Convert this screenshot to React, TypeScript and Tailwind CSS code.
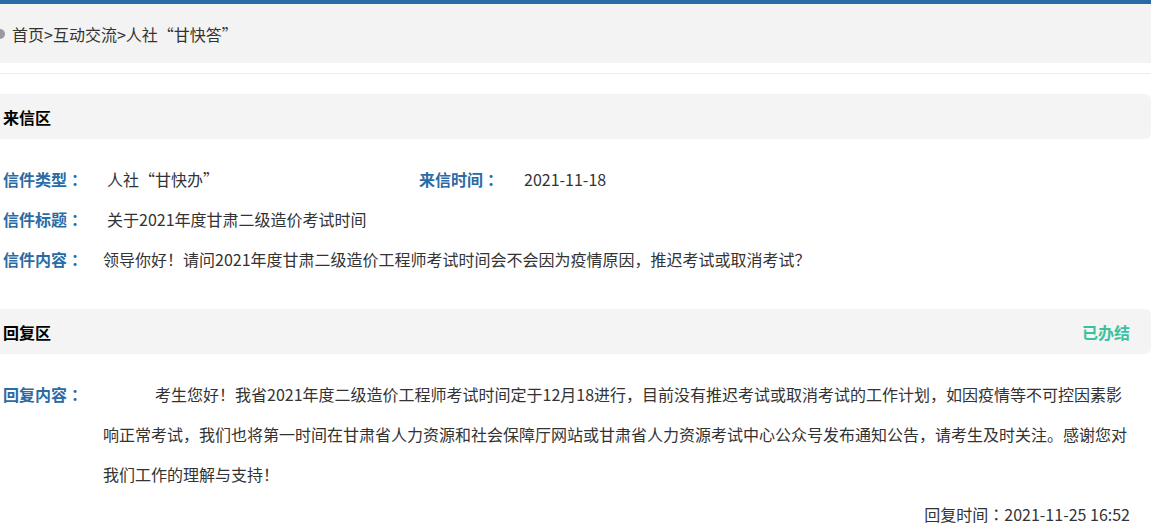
export default function App() {
  const font = { fontFamily: '"Microsoft YaHei", "Noto Sans CJK SC", "Noto Sans", sans-serif' }
  // TC face centres the full-width colon like the original page does
  const label = 'font-bold text-[#2a6ba5] [font-family:"Noto_Sans_CJK_TC","Noto_Sans_CJK_SC",sans-serif]'
  return (
    <div className="w-[1151px] h-[530px] overflow-hidden bg-white text-[16px] text-[#333]" style={font}>
      {/* top bar */}
      <div className="h-[4px] bg-[#2a6aa9]" />

      {/* breadcrumb */}
      <div className="h-[59px] bg-[#f3f3f3] flex items-center">
        <span className="w-[10px] h-[10px] rounded-full bg-[#9a9a9a] -ml-[5px] mr-[7px]" />
        <span className="leading-none text-[#333]">首页&gt;互动交流&gt;人社“甘快答”</span>
      </div>
      <div className="mt-[10px] border-t border-[#ececec]" />

      {/* letter section */}
      <div className="mt-[20px] h-[45px] bg-[#f4f4f4] rounded-r-[6px] flex items-center px-[3px]">
        <span className="font-bold text-black">来信区</span>
      </div>
      <div className="pt-[20px] pl-[3px]">
        <div className="h-[40px] flex items-center">
          <span className={`w-[104px] ${label}`}>信件类型：</span>
          <span className="w-[312px]">人社“甘快办”</span>
          <span className={`w-[105px] ${label}`}>来信时间：</span>
          <span>2021-11-18</span>
        </div>
        <div className="h-[40px] flex items-center">
          <span className={`w-[104px] ${label}`}>信件标题：</span>
          <span>关于2021年度甘肃二级造价考试时间</span>
        </div>
        <div className="h-[40px] flex items-center">
          <span className={`w-[100px] ${label}`}>信件内容：</span>
          <span>领导你好！请问2021年度甘肃二级造价工程师考试时间会不会因为疫情原因，推迟考试或取消考试？</span>
        </div>
      </div>

      {/* reply section */}
      <div className="mt-[30px] h-[45px] bg-[#f4f4f4] rounded-r-[6px] flex items-center justify-between pl-[3px] pr-[21px]">
        <span className="font-bold text-black">回复区</span>
        <span className="font-bold text-[#3bc19e]">已办结</span>
      </div>
      <div className="pt-[20px] pl-[3px] flex">
        <span className={`w-[100px] shrink-0 leading-[40px] ${label}`}>回复内容：</span>
        <p className="w-[1030px] leading-[40px] indent-[52px]">
          考生您好！我省2021年度二级造价工程师考试时间定于12月18进行，目前没有推迟考试或取消考试的工作计划，如因疫情等不可控因素影响正常考试，我们也将第一时间在甘肃省人力资源和社会保障厅网站或甘肃省人力资源考试中心公众号发布通知公告，请考生及时关注。感谢您对我们工作的理解与支持！
        </p>
      </div>
      <div className="flex justify-end pr-[21px] leading-[40px]">
        回复时间<span className='[font-family:"Noto_Sans_CJK_TC",sans-serif]'>：</span>2021-11-25 16:52
      </div>
    </div>
  )
}
